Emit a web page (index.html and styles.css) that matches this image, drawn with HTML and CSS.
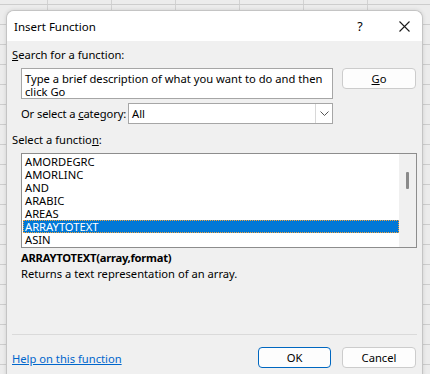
FILE: index.html
```html
<!DOCTYPE html>
<html>
<head>
<meta charset="utf-8">
<link rel="stylesheet" href="styles.css">
</head>
<body>
<div class="dialog">
  <div class="titlebar">
    <span class="title">Insert Function</span>
    <span class="help-btn">?</span>
    <span class="close-btn">
      <svg width="11" height="11" viewBox="0 0 11 11"><path d="M0.5 0.5 L10.5 10.5 M10.5 0.5 L0.5 10.5" stroke="#1a1a1a" stroke-width="1.1" fill="none"/></svg>
    </span>
  </div>
  <div class="content">
    <div class="label label-search"><u>S</u>earch for a function:</div>
    <div class="search-row">
      <div class="search-box">Type a brief description of what you want to do and then click Go</div>
      <div class="btn btn-go"><u>G</u>o</div>
    </div>
    <div class="category-row">
      <span class="cat-label">Or select a <u>c</u>ategory:</span>
      <div class="select">
        <span class="select-value">All</span>
        <span class="select-arrow">
          <svg width="9" height="5" viewBox="0 0 9 5"><path d="M0.5 0.5 L4.5 4.5 L8.5 0.5" stroke="#555" stroke-width="1" fill="none"/></svg>
        </span>
      </div>
    </div>
    <div class="label label-select">Select a functio<u>n</u>:</div>
    <div class="listbox">
      <div class="list-items">
        <div class="item">AMORDEGRC</div>
        <div class="item">AMORLINC</div>
        <div class="item">AND</div>
        <div class="item">ARABIC</div>
        <div class="item">AREAS</div>
        <div class="item selected">ARRAYTOTEXT</div>
        <div class="item">ASIN</div>
      </div>
      <div class="scrollbar"><div class="thumb"></div></div>
    </div>
    <div class="syntax">ARRAYTOTEXT(array,format)</div>
    <div class="desc">Returns a text representation of an array.</div>
    <div class="separator"></div>
    <div class="footer">
      <a class="help-link" href="#">Help on this function</a>
      <div class="btn btn-ok">OK</div>
      <div class="btn btn-cancel">Cancel</div>
    </div>
  </div>
</div>
</body>
</html>
```
FILE: styles.css
```css
html, body {
  margin: 0;
  padding: 0;
}
body {
  width: 430px;
  height: 374px;
  overflow: hidden;
  background-color: #ececec;
  background-image:
    linear-gradient(to bottom, transparent 4px, #cdcdcd 4px, #cdcdcd 5px, transparent 5px),
    linear-gradient(to right, transparent 47px, #d2d2d2 47px, #d2d2d2 48px, transparent 48px);
  background-size: 20px 20px, 64px 20px;
  background-repeat: repeat, repeat;
  font-family: "Segoe UI", "Noto Sans", sans-serif;
  font-size: 11.2px;
  color: #000;
}
.dialog {
  margin: 10px 0 0 6px;
  width: 415px;
  height: 380px;
  background: #f0f0f0;
  border: 1px solid #c4c4c4;
  border-bottom: none;
  border-radius: 8px 8px 0 0;
  box-shadow: 0 0 4px rgba(0,0,0,0.12);
  overflow: hidden;
}
.titlebar {
  height: 30px;
  background: #fff;
  display: flex;
  align-items: center;
  padding-left: 7px;
}
.title {
  flex: 1;
  font-size: 11.5px;
  padding-top: 1px;
}
.help-btn {
  width: 12px;
  text-align: center;
  margin-right: 33px;
  font-size: 12.5px;
}
.close-btn {
  display: flex;
  margin-right: 12px;
}
.content {
  padding: 0 0 0 5px;
}
.label {
  height: 14px;
  line-height: 14px;
}
.label-search {
  margin-top: 7px;
}
.search-row {
  display: flex;
  margin-top: 6px;
  margin-left: 9px;
  gap: 9px;
}
.search-box {
  box-sizing: border-box;
  width: 312px;
  height: 31px;
  border: 1px solid #a6a6a6;
  background: #fff;
  padding: 3px 0 0 3px;
  line-height: 13px;
}
.btn {
  box-sizing: border-box;
  width: 74px;
  height: 21px;
  background: #fdfdfd;
  border: 1px solid #cccccc;
  border-radius: 4px;
  display: flex;
  align-items: center;
  justify-content: center;
}
.category-row {
  display: flex;
  align-items: center;
  margin-top: 4px;
  margin-left: 9px;
  height: 21px;
}
.cat-label {
  width: 107px;
  white-space: nowrap;
  letter-spacing: -0.12px;
}
.select {
  box-sizing: border-box;
  width: 205px;
  height: 21px;
  background: #fff;
  border: 1px solid #a6a6a6;
  display: flex;
  align-items: center;
}
.select-value {
  flex: 1;
  padding-left: 3px;
}
.select-arrow {
  box-sizing: border-box;
  width: 17px;
  height: 19px;
  border-left: 1px solid #d8d8d8;
  display: flex;
  align-items: center;
  justify-content: center;
}
.label-select {
  margin-top: 9px;
}
.listbox {
  box-sizing: border-box;
  margin-top: 6px;
  margin-left: 9px;
  width: 396px;
  height: 95px;
  border: 1px solid #8d8d8d;
  display: flex;
}
.list-items {
  flex: 1;
  background: #fff;
  padding-top: 1px;
}
.item {
  height: 13px;
  line-height: 13px;
  padding-left: 2px;
  margin-left: 1px;
}
.item.selected {
  background: #0078d7;
  color: #fff;
  outline: 1px dotted #f2a23a;
  outline-offset: -1px;
}
.scrollbar {
  width: 17px;
  background: #f0f0f0;
}
.thumb {
  margin: 18px 0 0 7px;
  width: 3px;
  height: 17px;
  background: #8a8a8a;
  border-radius: 1px;
}
.syntax {
  margin-top: 3px;
  margin-left: 9px;
  font-weight: bold;
  letter-spacing: -0.25px;
  height: 14px;
  line-height: 14px;
}
.desc {
  margin-top: 2px;
  margin-left: 9px;
  height: 14px;
  line-height: 14px;
}
.separator {
  margin-top: 53px;
  width: 405px;
  height: 1px;
  background: #dadada;
}
.footer {
  display: flex;
  align-items: center;
  margin-top: 12px;
  height: 21px;
}
.help-link {
  flex: 1;
  color: #0066cc;
  text-decoration: underline;
  padding-top: 2px;
}
.btn-ok {
  width: 73px;
  border: 1px solid #0067c0;
  margin-right: 11px;
}
.btn-cancel {
  margin-right: 6px;
}
```
